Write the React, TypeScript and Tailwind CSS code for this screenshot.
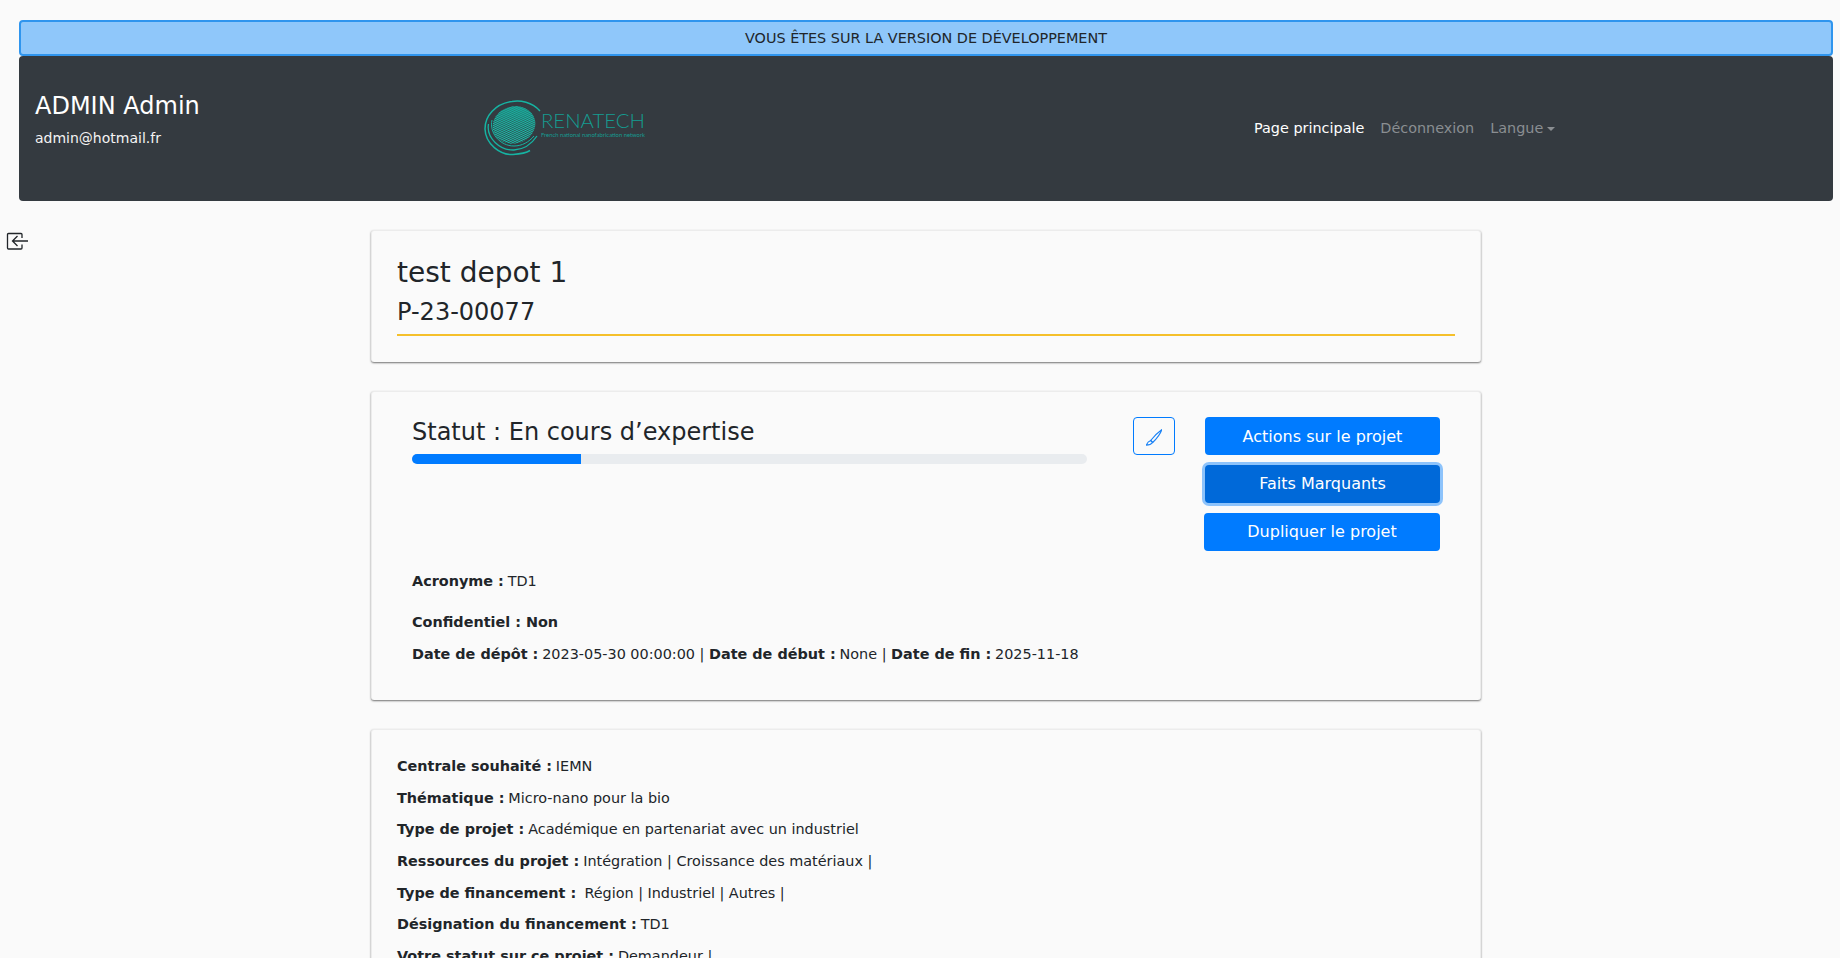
import React from "react";

function Logo() {
  return (
    <svg width="190" height="80" viewBox="0 0 190 80" className="block">
      <defs>
        <pattern id="hatch" width="1.8" height="1.8" patternUnits="userSpaceOnUse" patternTransform="rotate(40)">
          <rect width="1.8" height="1.8" fill="#343a40" />
          <rect width="1.8" height="1" fill="#1cc0ae" />
        </pattern>
        <linearGradient id="shade" x1="0.7" y1="0" x2="0.3" y2="1">
          <stop offset="0" stopColor="#17a596" stopOpacity="0.8" />
          <stop offset="0.55" stopColor="#17a596" stopOpacity="0.15" />
          <stop offset="1" stopColor="#17a596" stopOpacity="0" />
        </linearGradient>
      </defs>
      <ellipse cx="44" cy="35" rx="21.5" ry="18.5" fill="url(#hatch)" transform="rotate(-15 44 35)" />
      <ellipse cx="44" cy="35" rx="21.5" ry="18.5" fill="url(#shade)" transform="rotate(-15 44 35)" />
      <g fill="none" stroke="#16b3a2">
        <path d="M70 21 C62 12 50 10 42 11.5 C25 14 15 26 15 39 C15.5 54 30 65 43 64.5 C50 64 56 63 60 60.5" strokeWidth="1.5" />
        <path d="M18.5 34 C16 48 30 60.5 44 60 C53 59.5 61 55 67 46" strokeWidth="1.3" />
        <path d="M22 30 C19 43 30 56 44 56 C52 56 59 52 64 46" strokeWidth="1" />
      </g>
      <text x="71" y="38" fill="#149c91" fontSize="20" fontWeight="300" fontFamily="Lato, 'Liberation Sans', sans-serif" textLength="104" lengthAdjust="spacingAndGlyphs">RENATECH</text>
      <text x="71" y="47" fill="#149c91" fontSize="6.5" fontFamily="Lato, 'Liberation Sans', sans-serif" textLength="104" lengthAdjust="spacingAndGlyphs">French national nanofabrication network</text>
    </svg>
  );
}

function Label({ children }: { children: React.ReactNode }) {
  return <b className="font-bold mr-[-0.7px]">{children}</b>;
}

function Row({ label, value, className = "" }: { label: string; value: string; className?: string }) {
  return (
    <p className={"h-[21.6px] mb-[10px] text-[14.4px] leading-[21.6px] whitespace-pre " + className}>
      <Label>{label}</Label> {value}
    </p>
  );
}

const cardCls = "mx-[371px] w-[1110px] bg-[#fafafa] rounded-[3px] border-t border-l border-r border-[#ececec] shadow-[0_1px_2px_rgba(0,0,0,0.55)]";

export default function App() {
  return (
    <div className="relative h-screen overflow-hidden bg-[#fafafa] text-[#212529] font-['DejaVu_Sans',sans-serif]">
      <div className="pt-5 pl-[19px] pr-[7px]">
        <div className="h-9 rounded-[4px] border-2 border-[#2f95ee] bg-[#8fc7fa] flex items-center justify-center text-[14.4px] pt-px">
          VOUS ÊTES SUR LA VERSION DE DÉVELOPPEMENT
        </div>
        <div className="h-[145px] rounded-[4px] bg-[#343a40] flex">
          <div className="w-[451px] pl-4 pt-[32px] text-white">
            <div className="text-[24px] leading-[36px]">ADMIN Admin</div>
            <div className="text-[14px] leading-[21px] mt-[3.5px] text-[#f4f4f4]">admin@hotmail.fr</div>
          </div>
          <div className="w-[784px] pt-[34px]">
            <Logo />
          </div>
          <nav className="flex pt-[62px] gap-4 text-[14.4px] leading-[21px] whitespace-nowrap">
            <span className="text-white">Page principale</span>
            <span className="text-[#8a8e92]">Déconnexion</span>
            <span className="text-[#8a8e92] flex items-center h-[21px]">
              Langue
              <span className="ml-[4px] w-0 h-0 border-x-[4px] border-x-transparent border-t-[4px] border-t-[#8a8e92]" />
            </span>
          </nav>
        </div>
      </div>

      <svg className="absolute left-[5px] top-[232px]" width="24" height="19" viewBox="0 0 24 19" fill="none" stroke="#212529" strokeWidth="1.3">
        <path d="M17 6 V2.5 A1 1 0 0 0 16 1.5 H3.5 A1 1 0 0 0 2.5 2.5 V16 A1 1 0 0 0 3.5 17 H16 A1 1 0 0 0 17 16 V12.5" />
        <path d="M23 9 H7.5 M12.5 4 L7.5 9 L12.5 14" />
      </svg>

      <div className="pt-[29px]">
        <section className={cardCls + " h-[132px] px-[25px] pt-[24px]"}>
          <div className="text-[28px] leading-[36px]">test depot 1</div>
          <div className="text-[24px] leading-[36px] h-[36px] mt-[3px]">P-23-00077</div>
          <div className="h-[2px] mt-[4px] bg-[#f5c02b]" />
        </section>

        <section className={cardCls + " mt-[29px] h-[309px] pl-[40px] pr-[40px] pt-[25px] flex flex-col"}>
          <div className="flex h-[135px]">
            <div className="w-[675px]">
              <div className="text-[24px] leading-[30px]">Statut : En cours d’expertise</div>
              <div className="h-[10px] rounded-[5px] bg-[#e9ecef] overflow-hidden mt-[7px]">
                <div className="h-full w-1/4 bg-[#007bff]" />
              </div>
            </div>
            <div className="w-[117px] flex flex-col items-start pl-[46px]">
              <button className="w-[42px] h-[38px] rounded-[4px] border border-[#007bff] flex items-center justify-center">
                <svg className="mt-[3px]" width="16" height="17" viewBox="138 88 48 50" fill="none" stroke="#1a82f5" strokeWidth="3.4">
                  <path d="M185 90 C178 95 160 112 152 122 L158 128 C168 118 182 100 185 90 Z" />
                  <path d="M152 122 C146 124 141 130 139 136 C146 136 154 133 158 128 Z" />
                </svg>
              </button>
            </div>
            <div className="w-[236px] flex flex-col items-end text-[16px] text-white">
              <button className="w-[235px] h-[38px] pt-px rounded-[4px] bg-[#007bff]">Actions sur le projet</button>
              <button className="w-[235px] h-[38px] mt-[10px] rounded-[4px] bg-[#0069d9] ring-[3px] ring-[#8dc3fb]">Faits Marquants</button>
              <button className="w-[236px] h-[38px] mt-[10px] rounded-[4px] bg-[#007bff]">Dupliquer le projet</button>
            </div>
          </div>
          <div className="mt-[19px] text-[14.4px] leading-[21.6px]">
            <Row label="Acronyme :" value="TD1" className="!mb-[19.4px]" />
            <p className="h-[21.6px] mb-[10px] font-bold">Confidentiel : Non</p>
            <p>
              <Label>Date de dépôt :</Label> 2023-05-30 00:00:00 | <Label>Date de début :</Label> None | <Label>Date de fin :</Label> 2025-11-18
            </p>
          </div>
        </section>

        <section className={cardCls + " mt-[29px] h-[400px] px-[25px] pt-[26.2px]"}>
          <Row label="Centrale souhaité :" value="IEMN" />
          <Row label="Thématique :" value="Micro-nano pour la bio" />
          <Row label="Type de projet :" value="Académique en partenariat avec un industriel" />
          <Row label="Ressources du projet :" value="Intégration | Croissance des matériaux |" />
          <Row label="Type de financement :" value=" Région | Industriel | Autres |" className="[word-spacing:-0.1px]" />
          <Row label="Désignation du financement :" value="TD1" />
          <Row label="Votre statut sur ce projet :" value="Demandeur |" />
        </section>
      </div>
    </div>
  );
}
